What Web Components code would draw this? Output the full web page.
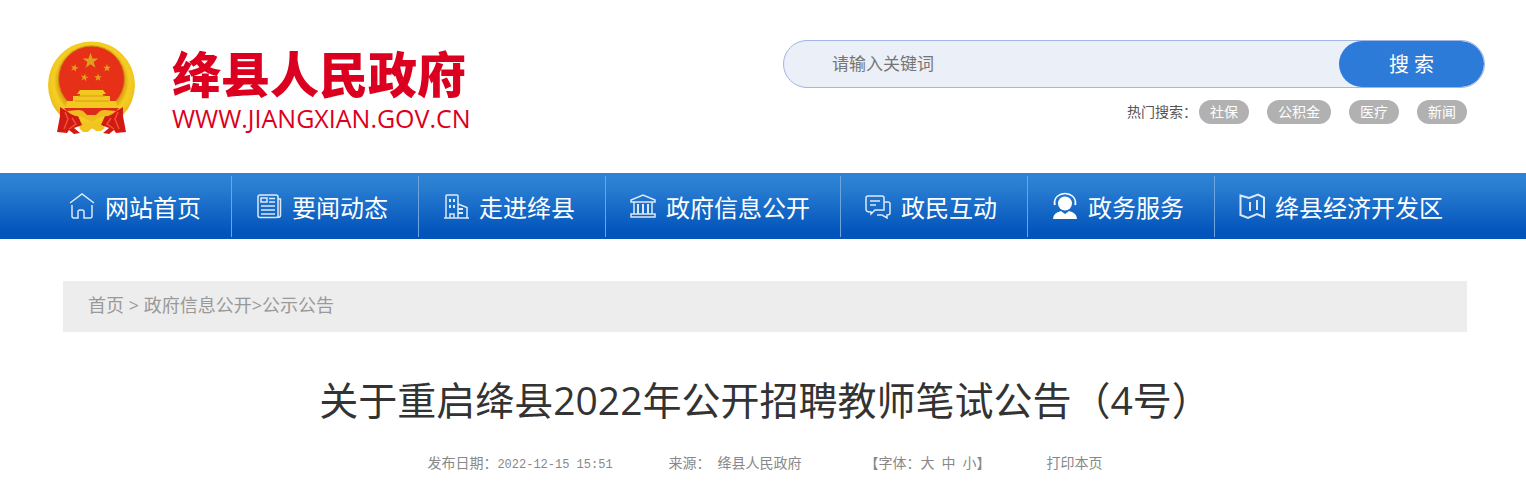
<!DOCTYPE html>
<html lang="zh-CN">
<head>
<meta charset="utf-8">
<meta name="viewport" content="width=device-width, initial-scale=1">
<title>绛县人民政府</title>
<style>
  body { margin: 0; background: #fff; color: #333; font-family: "Open Sans", "Noto Sans CJK SC", sans-serif; font-size: 14px; }
  main { display: block; padding: 42px 59px 0 63px; }
</style>
</head>
<body>
<site-header>
  <site-logo slot="logo" name="绛县人民政府" domain="WWW.JIANGXIAN.GOV.CN"></site-logo>
  <site-search slot="search"></site-search>
  <hot-words slot="search">
    <hot-word>社保</hot-word>
    <hot-word>公积金</hot-word>
    <hot-word>医疗</hot-word>
    <hot-word>新闻</hot-word>
  </hot-words>
</site-header>
<nav-bar>
  <nav-item icon="home">网站首页</nav-item>
  <nav-item icon="news">要闻动态</nav-item>
  <nav-item icon="building">走进绛县</nav-item>
  <nav-item icon="bank">政府信息公开</nav-item>
  <nav-item icon="chat">政民互动</nav-item>
  <nav-item icon="service">政务服务</nav-item>
  <nav-item icon="map">绛县经济开发区</nav-item>
</nav-bar>
<main>
  <bread-crumb></bread-crumb>
  <article-head>
    关于重启绛县2022年公开招聘教师笔试公告（4号）
    <time slot="date" datetime="2022-12-15T15:51">2022-12-15 15:51</time>
    <span slot="source">绛县人民政府</span>
  </article-head>
</main>

<script>
  const define = (name, markup, setup) => {
    const template = document.createElement('template');
    template.innerHTML = markup;
    customElements.define(name, class extends HTMLElement {
      constructor() {
        super();
        this.attachShadow({ mode: 'open' }).append(template.content.cloneNode(true));
      }
      connectedCallback() {
        if (setup) setup(this, this.shadowRoot);
      }
    });
  };

  define('site-header', `
    <style>
      :host { display: block; }
      header { display: flex; justify-content: space-between; align-items: flex-start; gap: 40px; min-height: 133px; padding: 40px 41px 0 47px; }
      .search { flex: 0 1 50%; max-width: 702px; }
    </style>
    <header>
      <slot name="logo"></slot>
      <div class="search"><slot name="search"></slot></div>
    </header>`);

  define('site-logo', `
    <style>
      :host { display: block; flex: none; color: #dc0020; }
      a { display: flex; gap: 36px; color: inherit; text-decoration: none; }
      svg { display: block; width: 89px; height: 95px; }
      .words { display: flex; flex-direction: column; padding-top: 8px; white-space: nowrap; }
      .name { font: 900 49px/56px "Liberation Sans", "Noto Sans CJK SC", sans-serif; }
      .domain { font: 400 25px/28px "Open Sans", sans-serif; }
    </style>
    <a href="#">
      <svg viewBox="0 0 89 95" aria-hidden="true">
        <defs>
          <radialGradient id="gold" cx=".5" cy=".46" r=".54">
            <stop offset=".7" stop-color="#e0a312"/><stop offset=".8" stop-color="#f4cf22"/>
            <stop offset=".92" stop-color="#f0c41e"/><stop offset="1" stop-color="#dfb01a"/>
          </radialGradient>
          <polygon id="star" points="0,-10 2.4,-3.2 9.5,-3.1 3.8,1.2 5.9,8.1 0,4 -5.9,8.1 -3.8,1.2 -9.5,-3.1 -2.4,-3.2"/>
        </defs>
        <circle cx="44.500" cy="45" r="43.500" fill="url(#gold)"/>
        <circle cx="44.500" cy="39" r="33" fill="#e63118" stroke="#cf8a12" stroke-width="1"/>
        <g fill="#dfa11b">
          <use href="#star" transform="translate(43.500 21) scale(.82)"/>
          <use href="#star" transform="translate(27.500 28) rotate(15) scale(.41)"/>
          <use href="#star" transform="translate(37.500 37.500) rotate(10) scale(.41)"/>
          <use href="#star" transform="translate(51 37.500) scale(.41)"/>
          <use href="#star" transform="translate(60 28) scale(.41)"/>
        </g>
        <path d="M33 50h23l3 4h-3v2h7v5h6l2 7H18l2-7h6v-5h7v-2h-3z" fill="#f3c91f"/>
        <path d="M28 61h34M31 56h27" stroke="#d99a18" stroke-width="1"/>
        <path d="M17 68h55l-5 6-12-2-10 7-12-7-11 2z" fill="#dc2b18"/>
        <path d="M13 67l8 5 10 4 4 9-8 3 6 5-6 1-5-4-2 3-10-1 3-16z" fill="#d21a15"/>
        <path d="M76 67l-8 5-10 4-4 9 8 3-6 5 6 1 5-4 2 3 10-1-3-16z" fill="#d21a15"/>
        <path d="M18 72l3 7-4 10M25 78l4 6-7 5M71 72l-3 7 4 10M64 78l-4 6 7 5" fill="none" stroke="#f05332" stroke-width="1.500"/>
        <path d="M20 71c6 0 11-2 16 0l4 4h9l4-4c5-2 10 0 16 0-4 4-8 6-13 5l-6 3-5 3-6-3-5-3c-5 1-10-1-14-5z" fill="#eebc1d"/>
        <path d="M32 88l7-6 6 3 6-3 7 6-4 3h-5l-4-3-4 4h-5z" fill="#f2c41f"/>
      </svg>
      <span class="words"><span class="name"></span><span class="domain"></span></span>
    </a>`, (host, root) => {
      root.querySelector('.name').textContent = host.getAttribute('name');
      root.querySelector('.domain').textContent = host.getAttribute('domain');
    });

  define('site-search', `
    <style>
      :host { display: block; }
      form { display: flex; box-sizing: border-box; height: 48px; margin: 0; overflow: hidden; border: 1px solid #a4b4e4; border-radius: 24px; background: #ebeff7; }
      input { flex: 1; min-width: 0; padding: 0 0 2px 48px; border: 0; outline: 0; background: none; font: inherit; font-size: 17px; color: #333; }
      input::placeholder { color: #757575; opacity: 1; }
      button { flex: none; width: 145px; padding: 0 0 2px; border: 0; border-radius: 24px; background: #2d7bd9; color: #fff; font: inherit; font-size: 20px; cursor: pointer; }
    </style>
    <form>
      <input type="text" aria-label="请输入关键词" placeholder="请输入关键词">
      <button type="button">搜 索</button>
    </form>`);

  define('hot-words', `
    <style>
      :host { display: flex; flex-wrap: wrap; justify-content: flex-end; align-items: center; gap: 18px; margin-top: 12px; padding-right: 18px; color: #555; font-size: 14px; line-height: 24px; }
      span { margin-right: -16px; }
    </style>
    <span>热门搜索：</span><slot></slot>`);

  define('hot-word', `
    <style>
      :host { display: block; }
      a { display: block; padding: 0 11px; border-radius: 12px; background: #b1b1b1; color: #fff; text-decoration: none; }
    </style>
    <a href="#"><slot></slot></a>`);

  define('nav-bar', `
    <style>
      :host { display: block; background: linear-gradient(#2d84d5, #2a7ed1 20%, #0254bb 90%); }
      nav { display: flex; flex-wrap: wrap; padding: 3px 45px 2px; }
    </style>
    <nav aria-label="主导航"><slot></slot></nav>`);

  const icons = {
    home: '<path d="M1 11 13 2l12 9M3 13v11q0 2 2 2h4v-6q0-2 2-2h2q2 0 2 2v6h6q2 0 2-2V13" stroke-width="1.500"/>',
    news: '<rect x="2" y="3" width="20" height="22.500" rx="2"/><path d="M22 7h2.500v16q0 2.500-3 2.500"/><rect x="5" y="6" width="6" height="4"/><path d="M13 6.500h6M13 10h6M5 14h14M5 18h14M5 22h14" stroke-width="1.500"/>',
    building: '<path d="M3 26V4q0-1 1-1h10q1 0 1 1v22M1 26h25M15 12l9 3.500V26M7 26v-4h4v4"/><path d="M7 7v3M11 7v3M7 13v3M11 13v3M15 17h5M15 21h5" stroke-width="2"/>',
    bank: '<path d="M1 10v-2l12-5 12 5v2zM1 22h24v3H1zM4 10v12M22 10v12"/><path d="M8 12v10M13 12v10M18 12v10" stroke-width="2"/>',
    chat: '<path d="M5 20q-4 0-4-3V6q0-2 2-2h14q2 0 2 2v12H10l-4 4v-2zM19 10h4q2 0 2 2v9q0 2-3 2v3l-5-3h-5"/><path d="M5 9h10M5 13h6"/>',
    service: '<path d="M3 13C1 5 8 1.500 13 1.500S25 5 23 13M2.500 9v4M23.500 9v4"/><circle cx="13" cy="11.500" r="7" fill="currentColor" stroke="none"/><path d="M1 27q0-6 8-8l4 3 4-3q8 2 8 8z" fill="currentColor" stroke="none"/>',
    map: '<path d="M1.500 3.500 10 6l9-3.500 6 3V25l-7-3-9 4-7.500-3z" stroke-width="2"/><path d="M11 10v9M18 8v10" stroke-width="2"/>'
  };

  define('nav-item', `
    <style>
      :host { display: block; border-right: 1px solid #6ea5e0; }
      :host(:last-child) { border-right: 0; }
      a { display: flex; align-items: flex-start; gap: 8px; padding: 3px 30px 0 24px; color: #fff; text-decoration: none; font-size: 24px; line-height: 58px; white-space: nowrap; }
      svg { flex: none; width: 28px; height: 28px; margin-top: 13px; fill: none; stroke: currentColor; stroke-width: 1.5; opacity: .85; }
      :host([icon="service"]) svg { opacity: 1; }
    </style>
    <a href="#"><svg viewBox="0 0 28 28" aria-hidden="true"></svg><span><slot></slot></span></a>`, (host, root) => {
      root.querySelector('svg').innerHTML = icons[host.getAttribute('icon')];
    });

  define('bread-crumb', `
    <style>
      :host { display: block; background: #ededed; color: #999; font-size: 18px; line-height: 49px; }
      nav { padding: 0 25px 2px; }
      a { color: inherit; text-decoration: none; }
    </style>
    <nav aria-label="当前位置"><a href="#">首页</a> &gt; <a href="#">政府信息公开</a>&gt;<a href="#">公示公告</a></nav>`);

  define('article-head', `
    <style>
      :host { display: block; text-align: center; }
      h1 { margin: 38px 0 21px; font-size: 39px; font-weight: 400; line-height: 60px; color: #333; }
      .meta { display: flex; flex-wrap: wrap; justify-content: center; gap: 0 56px; color: #888; font-family: "Noto Sans CJK SC", sans-serif; font-size: 14px; line-height: 22px; }
      .meta > span { white-space: pre; }
      ::slotted(time) { font-family: "Liberation Mono", monospace; font-size: 12px; }
      .gap { padding-left: 7px; }
      .sizes { display: flex; gap: 7px; }
      a { color: inherit; text-decoration: none; }
    </style>
    <h1><slot></slot></h1>
    <div class="meta">
      <span>发布日期：<slot name="date"></slot></span>
      <span>来源：<span class="gap"><slot name="source"></slot></span></span>
      <span class="gap sizes"><span>【字体：<a href="#">大</a></span><a href="#">中</a><span><a href="#">小</a>】</span></span>
      <a href="#">打印本页</a>
    </div>`);
</script>
</body>
</html>
